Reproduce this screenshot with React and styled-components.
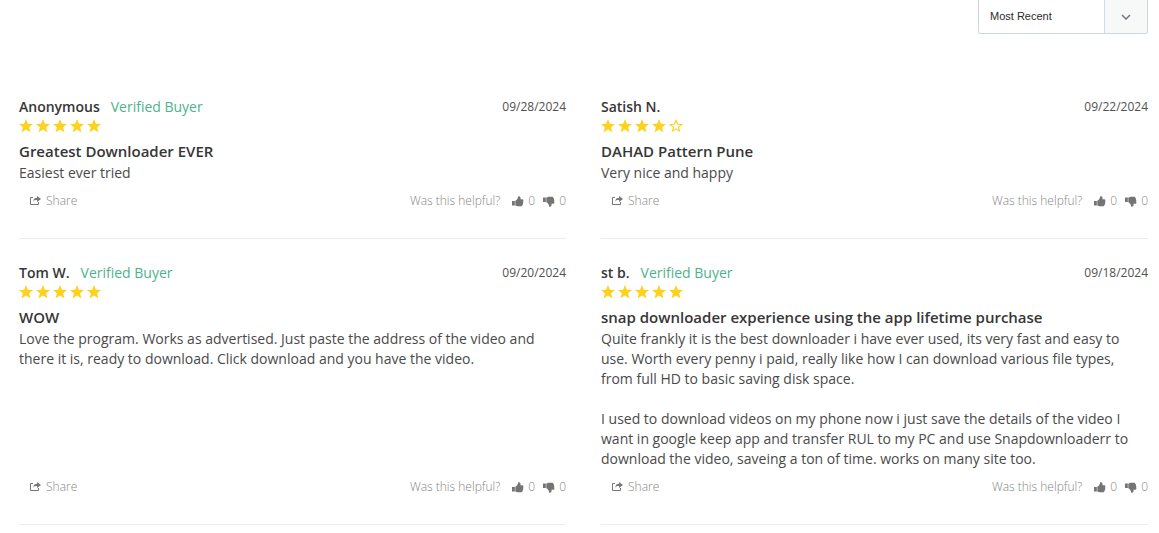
import React from 'react'
import styled, { createGlobalStyle } from "styled-components";

const GlobalStyle = createGlobalStyle`
  * {
    box-sizing: border-box;
  }

  body {
    margin: 0;
    background: #ffffff;
    color: #363636;
    font-family: "Open Sans", "Noto Sans", sans-serif;
    font-size: 14px;
    line-height: 20px;
  }
`;

const ReviewsSection = styled.main`
  padding: 0 11px 0 19px;
`;

const Toolbar = styled.div`
  display: flex;
  justify-content: flex-end;
  margin-bottom: 63px;
`;

const SortBox = styled.div`
  position: relative;
  width: 170px;
  height: 34px;
`;

const SortSelect = styled.select`
  appearance: none;
  width: 100%;
  height: 100%;
  padding: 0 56px 1px 11px;
  border: 1px solid #cbd6e2;
  border-top: none;
  border-radius: 0 0 3px 3px;
  background: white;
  color: #2c2c2c;
  font-family: "Liberation Sans", Arial, sans-serif;
  font-size: 11px;
`;

const SortArrow = styled.span`
  position: absolute;
  top: 0;
  right: 1px;
  bottom: 1px;
  width: 43px;
  display: flex;
  align-items: center;
  justify-content: center;
  border-left: 1px solid #cbdde8;
  border-radius: 0 0 2px 0;
  background: #f7f9f9;
  pointer-events: none;
`;

const ReviewGrid = styled.div`
  display: grid;
  grid-template-columns: 1fr 1fr;
  column-gap: 35px;
  row-gap: 24px;
`;

const ReviewCard = styled.article`
  display: flex;
  flex-direction: column;
  padding-bottom: 27px;
  border-bottom: 1px solid #ececec;
`;

const ReviewHeader = styled.header`
  display: flex;
  align-items: center;
`;

const Author = styled.span`
  font-weight: 600;
`;

const Verified = styled.span`
  margin-left: 11px;
  color: #4db38c;
`;

const ReviewDate = styled.time`
  margin-left: auto;
  color: #505050;
  font-size: 12px;
`;

const Stars = styled.div`
  display: flex;
  gap: 3px;
  height: 17px;
  align-items: center;
`;

const ReviewTitle = styled.h3`
  margin: 7px 0 2px;
  font-size: 15px;
  font-weight: 600;
  line-height: 20px;
`;

const ReviewText = styled.p`
  margin: 0;
  color: #4a4a4a;
  white-space: pre-line;
`;

const ReviewFooter = styled.footer`
  display: flex;
  align-items: center;
  margin-top: auto;
  padding-top: 8px;
  color: #858585;
  font-size: 12px;
  font-weight: 300;
`;

const FooterButton = styled.button`
  display: flex;
  align-items: center;
  gap: ${(props) => props.$gap || 4}px;
  margin: 0 0 0 ${(props) => props.$left}px;
  padding: 0;
  border: none;
  background: none;
  color: inherit;
  font: inherit;
  cursor: pointer;
`;

const Helpful = styled.span`
  margin-left: auto;
`;

function Star({ filled }) {
  return (
    <svg width="14" height="14" viewBox="0 0 14 14" aria-hidden="true">
      {filled ? (
        <path d="M7 0 L8.900 4.700 L14 5 L10.100 8.200 L11.400 13.200 L7 10.400 L2.600 13.200 L3.900 8.200 L0 5 L5.100 4.700 Z" fill="#fcd21c" />
      ) : (
        <path
          d="M7 1.300 L8.500 5.200 L12.700 5.500 L9.500 8.100 L10.600 12.100 L7 9.800 L3.400 12.100 L4.500 8.100 L1.300 5.500 L5.500 5.200 Z"
          fill="none"
          stroke="#fcd21c"
          strokeWidth="1.1"
        />
      )}
    </svg>
  );
}

function ShareIcon() {
  return (
    <svg width="12" height="10" viewBox="0 0 12 10" aria-hidden="true">
      <path d="M4 1.500 H1.500 V8.500 H9.500 V6" fill="none" stroke="#777777" />
      <path d="M8 0 L12 3 L8 6 V4 H6.500 C5.500 4 5 4.600 4.500 6 C4.300 3.500 5.300 2 7 2 H8 Z" fill="#777777" />
    </svg>
  );
}

function ThumbIcon({ down }) {
  return (
    <svg width="12" height="11" viewBox="0 0 12 11" aria-hidden="true">
      <g transform={down ? "translate(0 11) scale(1 -1)" : undefined} fill="#747474">
        <path d="M0 5 H2.800 V9.500 H0 Z" />
        <path d="M3.300 4.800 C4.500 4.300 6 3 6.200 0.300 C8.400 0 9 1.600 8.400 3.300 H10.300 C11.500 3.300 11.700 4.500 11.100 5.200 C11.600 5.900 11.400 6.700 10.900 7.100 C11.200 8 10.900 8.600 10.400 8.900 C10.300 9.900 9.800 10.300 8.900 10.300 H6.500 C5 10.300 4.300 9.600 3.300 9.400 Z" />
      </g>
    </svg>
  );
}

const reviews = [
  {
    author: "Anonymous",
    verified: true,
    date: "09/28/2024",
    stars: 5,
    title: "Greatest Downloader EVER",
    text: "Easiest ever tried",
  },
  {
    author: "Satish N.",
    verified: false,
    date: "09/22/2024",
    stars: 4,
    title: "DAHAD Pattern Pune",
    text: "Very nice and happy",
  },
  {
    author: "Tom W.",
    verified: true,
    date: "09/20/2024",
    stars: 5,
    title: "WOW",
    text: "Love the program. Works as advertised. Just paste the address of the video and there it is, ready to download. Click download and you have the video.",
  },
  {
    author: "st b.",
    verified: true,
    date: "09/18/2024",
    stars: 5,
    title: "snap downloader experience using the app lifetime purchase",
    text: "Quite frankly it is the best downloader i have ever used, its very fast and easy to use. Worth every penny i paid, really like how I can download various file types, from full HD to basic saving disk space.\n\nI used to download videos on my phone now i just save the details of the video I want in google keep app and transfer RUL to my PC and use Snapdownloaderr to download the video, saveing a ton of time. works on many site too.",
  },
];

function Review({ review }) {
  return (
    <ReviewCard>
      <ReviewHeader>
        <Author>{review.author}</Author>
        {review.verified && <Verified>Verified Buyer</Verified>}
        <ReviewDate>{review.date}</ReviewDate>
      </ReviewHeader>
      <Stars role="img" aria-label={`${review.stars} out of 5 stars`}>
        {[1, 2, 3, 4, 5].map((n) => (
          <Star key={n} filled={n <= review.stars} />
        ))}
      </Stars>
      <ReviewTitle>{review.title}</ReviewTitle>
      <ReviewText>{review.text}</ReviewText>
      <ReviewFooter>
        <FooterButton type="button" $left={10} $gap={5}>
          <ShareIcon />
          Share
        </FooterButton>
        <Helpful>Was this helpful?</Helpful>
        <FooterButton type="button" $left={12} aria-label="Helpful">
          <ThumbIcon />
          0
        </FooterButton>
        <FooterButton type="button" $left={8} aria-label="Not helpful">
          <ThumbIcon down />
          0
        </FooterButton>
      </ReviewFooter>
    </ReviewCard>
  );
}

export default function App() {
  return (
    <>
      <GlobalStyle />
      <ReviewsSection>
        <Toolbar>
          <SortBox>
            <SortSelect aria-label="Sort reviews" defaultValue="recent">
              <option value="recent">Most Recent</option>
              <option value="highest">Highest Rated</option>
              <option value="lowest">Lowest Rated</option>
            </SortSelect>
            <SortArrow>
              <svg width="10" height="6" viewBox="0 0 10 6" aria-hidden="true">
                <path d="M1 1 L5 5 L9 1" fill="none" stroke="#6f7880" strokeWidth="1.5" />
              </svg>
            </SortArrow>
          </SortBox>
        </Toolbar>
        <ReviewGrid>
          {reviews.map((review) => (
            <Review key={review.date} review={review} />
          ))}
        </ReviewGrid>
      </ReviewsSection>
    </>
  );
}
